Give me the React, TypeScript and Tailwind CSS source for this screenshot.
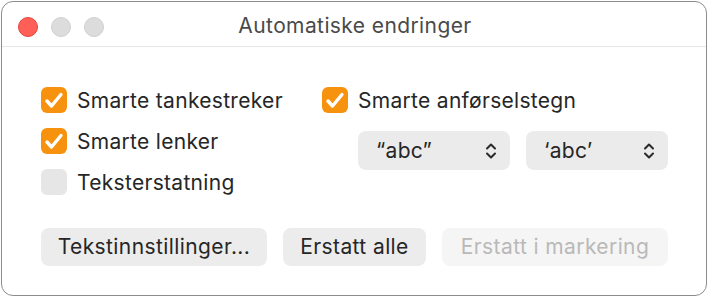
import React, { useState } from 'react';

const font = { fontFamily: 'Inter, "Noto Sans", sans-serif' };

const CheckIcon = () => (
    <svg viewBox="0 0 26 26" className="w-[26px] h-[26px]">
        <path d="M6 14 L10.5 19 L20 7.5" fill="none" stroke="white" strokeWidth="3.4" strokeLinecap="round" strokeLinejoin="round" />
    </svg>
);

const Checkbox: React.FC<{ checked: boolean; label: string; onToggle: () => void }> = ({ checked, label, onToggle }) => (
    <button onClick={onToggle} className="flex items-center h-[26px] gap-[10px] text-left">
        <span
            className={`flex items-center justify-center w-[26px] h-[26px] rounded-[6px] ${
                checked ? 'bg-[#f7920f]' : 'bg-[#e6e6e6]'
            }`}
        >
            {checked && <CheckIcon />}
        </span>
        <span className="text-[21px] leading-none text-[#262626] tracking-[0.3px]">{label}</span>
    </button>
);

const Chevrons = () => (
    <svg viewBox="0 0 14 22" className="w-[14px] h-[22px]">
        <path d="M3 8.5 L7 4.5 L11 8.5 M3 13.5 L7 17.5 L11 13.5" fill="none" stroke="#2a2a2a" strokeWidth="2" strokeLinecap="round" strokeLinejoin="round" />
    </svg>
);

const PopUp: React.FC<{ value: string; width: string }> = ({ value, width }) => (
    <div className={`flex items-center justify-between h-[39px] rounded-[8px] bg-[#ebebeb] pl-[18px] pr-[12px] ${width}`}>
        <span className="text-[21px] leading-none text-[#262626] tracking-[0.3px]">{value}</span>
        <Chevrons />
    </div>
);

export default function App() {
    const [dashes, setDashes] = useState(true);
    const [links, setLinks] = useState(true);
    const [replace, setReplace] = useState(false);
    const [quotes, setQuotes] = useState(true);

    return (
        <div className="w-[710px] h-[298px] bg-white pt-px pl-px" style={font}>
            <div className="w-[706px] h-[295px] rounded-[12px] border border-[#8c8c8c] bg-white overflow-hidden flex flex-col">
                <div className="relative h-[45px] shrink-0 border-b border-[#e6e6e6] flex items-center justify-center">
                    <div className="absolute left-[16px] top-[15px] flex gap-[13px]">
                        <span className="w-[20px] h-[20px] rounded-full bg-[#ff5f57] border border-[#e5453d]" />
                        <span className="w-[20px] h-[20px] rounded-full bg-[#dcdcdc] border border-[#d0d0d0]" />
                        <span className="w-[20px] h-[20px] rounded-full bg-[#dcdcdc] border border-[#d0d0d0]" />
                    </div>
                    <span className="text-[21px] text-[#4a4a4a] leading-none tracking-[0.4px] mt-[3px] ml-[2px]">Automatiske endringer</span>
                </div>

                <div className="flex pl-[39px] pt-[40px]">
                    <div className="w-[281px] flex flex-col gap-[15px]">
                        <Checkbox checked={dashes} label="Smarte tankestreker" onToggle={() => setDashes(!dashes)} />
                        <Checkbox checked={links} label="Smarte lenker" onToggle={() => setLinks(!links)} />
                        <Checkbox checked={replace} label="Teksterstatning" onToggle={() => setReplace(!replace)} />
                    </div>
                    <div className="flex flex-col">
                        <Checkbox checked={quotes} label="Smarte anførselstegn" onToggle={() => setQuotes(!quotes)} />
                        <div className="flex gap-[16px] ml-[36px] mt-[18px]">
                            <PopUp value="“abc”" width="w-[152px]" />
                            <PopUp value="‘abc’" width="w-[142px]" />
                        </div>
                    </div>
                </div>

                <div className="flex gap-[16px] pl-[39px] mt-[33px]">
                    <button className="w-[226px] h-[38px] rounded-[8px] bg-[#ececec] text-[21px] tracking-[0.4px] text-[#262626]">Tekstinnstillinger...</button>
                    <button className="w-[143px] h-[38px] rounded-[8px] bg-[#ececec] text-[21px] tracking-[0.4px] text-[#262626]">Erstatt alle</button>
                    <button disabled className="w-[226px] h-[38px] rounded-[8px] bg-[#f5f5f5] text-[21px] tracking-[0.4px] text-[#b9b9b9]">Erstatt i markering</button>
                </div>
            </div>
        </div>
    );
}
